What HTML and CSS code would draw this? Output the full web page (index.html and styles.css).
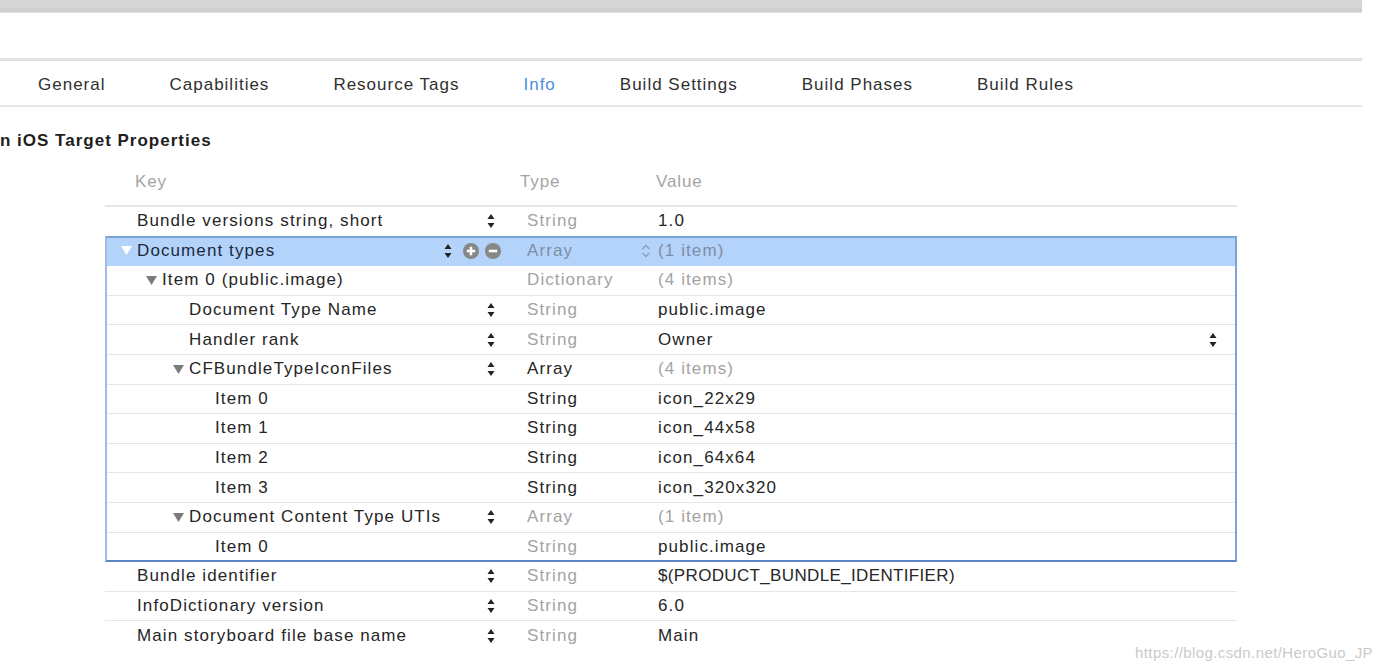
FILE: index.html
```html
<!DOCTYPE html>
<html>
<head>
<meta charset="utf-8">
<title>Info</title>
<link rel="stylesheet" href="styles.css">
</head>
<body>
<div class="page">
  <div class="topbar"></div>
  <nav class="tabs">
    <span class="tab">General</span>
    <span class="tab">Capabilities</span>
    <span class="tab">Resource Tags</span>
    <span class="tab active">Info</span>
    <span class="tab">Build Settings</span>
    <span class="tab">Build Phases</span>
    <span class="tab">Build Rules</span>
  </nav>

  <h2 class="section-title">n iOS Target Properties</h2>

  <div class="colhead">
    <span class="ch-key">Key</span>
    <span class="ch-type">Type</span>
    <span class="ch-value">Value</span>
  </div>

  <div class="plist">
    <div class="row">
      <div class="key l0"><span class="ktext">Bundle versions string, short</span><span class="ctrls"><svg class="stepper" viewBox="0 0 8 16"><polygon points="0.5,6 4,1 7.5,6"/><polygon points="0.5,10 7.5,10 4,15"/></svg></span></div>
      <div class="type muted">String</div>
      <div class="value">1.0</div>
    </div>

    <div class="group">
      <div class="row selected">
        <div class="key l0"><svg class="disc white" viewBox="0 0 11 9"><polygon points="0,0 11,0 5.5,9"/></svg><span class="ktext">Document types</span><span class="ctrls wide"><svg class="stepper" viewBox="0 0 8 16"><polygon points="0.5,6 4,1 7.5,6"/><polygon points="0.5,10 7.5,10 4,15"/></svg><svg class="circ" viewBox="0 0 16 16"><circle cx="8" cy="8" r="8"/><path d="M8 3.8v8.4M3.8 8h8.4"/></svg><svg class="circ" viewBox="0 0 16 16"><circle cx="8" cy="8" r="8"/><path d="M3.8 8h8.4"/></svg></span></div>
        <div class="type sel-muted">Array</div>
        <div class="value chev"><svg class="updown" viewBox="0 0 10 14"><polyline points="1.5,5 5,1.5 8.5,5"/><polyline points="1.5,9 5,12.5 8.5,9"/></svg><span class="sel-muted">(1 item)</span></div>
      </div>
      <div class="row">
        <div class="key l1"><svg class="disc" viewBox="0 0 11 9"><polygon points="0,0 11,0 5.5,9"/></svg><span class="ktext">Item 0 (public.image)</span></div>
        <div class="type muted">Dictionary</div>
        <div class="value muted">(4 items)</div>
      </div>
      <div class="row">
        <div class="key l2"><span class="ktext">Document Type Name</span><span class="ctrls"><svg class="stepper" viewBox="0 0 8 16"><polygon points="0.5,6 4,1 7.5,6"/><polygon points="0.5,10 7.5,10 4,15"/></svg></span></div>
        <div class="type muted">String</div>
        <div class="value">public.image</div>
      </div>
      <div class="row">
        <div class="key l2"><span class="ktext">Handler rank</span><span class="ctrls"><svg class="stepper" viewBox="0 0 8 16"><polygon points="0.5,6 4,1 7.5,6"/><polygon points="0.5,10 7.5,10 4,15"/></svg></span></div>
        <div class="type muted">String</div>
        <div class="value popup"><span class="vtext">Owner</span><svg class="stepper" viewBox="0 0 8 16"><polygon points="0.5,6 4,1 7.5,6"/><polygon points="0.5,10 7.5,10 4,15"/></svg></div>
      </div>
      <div class="row">
        <div class="key l2"><svg class="disc" viewBox="0 0 11 9"><polygon points="0,0 11,0 5.5,9"/></svg><span class="ktext">CFBundleTypeIconFiles</span><span class="ctrls"><svg class="stepper" viewBox="0 0 8 16"><polygon points="0.5,6 4,1 7.5,6"/><polygon points="0.5,10 7.5,10 4,15"/></svg></span></div>
        <div class="type">Array</div>
        <div class="value muted">(4 items)</div>
      </div>
      <div class="row">
        <div class="key l3"><span class="ktext">Item 0</span></div>
        <div class="type">String</div>
        <div class="value">icon_22x29</div>
      </div>
      <div class="row">
        <div class="key l3"><span class="ktext">Item 1</span></div>
        <div class="type">String</div>
        <div class="value">icon_44x58</div>
      </div>
      <div class="row">
        <div class="key l3"><span class="ktext">Item 2</span></div>
        <div class="type">String</div>
        <div class="value">icon_64x64</div>
      </div>
      <div class="row">
        <div class="key l3"><span class="ktext">Item 3</span></div>
        <div class="type">String</div>
        <div class="value">icon_320x320</div>
      </div>
      <div class="row">
        <div class="key l2"><svg class="disc" viewBox="0 0 11 9"><polygon points="0,0 11,0 5.5,9"/></svg><span class="ktext">Document Content Type UTIs</span><span class="ctrls"><svg class="stepper" viewBox="0 0 8 16"><polygon points="0.5,6 4,1 7.5,6"/><polygon points="0.5,10 7.5,10 4,15"/></svg></span></div>
        <div class="type muted">Array</div>
        <div class="value muted">(1 item)</div>
      </div>
      <div class="row last">
        <div class="key l3"><span class="ktext">Item 0</span></div>
        <div class="type muted">String</div>
        <div class="value">public.image</div>
      </div>
    </div>

    <div class="row">
      <div class="key l0"><span class="ktext">Bundle identifier</span><span class="ctrls"><svg class="stepper" viewBox="0 0 8 16"><polygon points="0.5,6 4,1 7.5,6"/><polygon points="0.5,10 7.5,10 4,15"/></svg></span></div>
      <div class="type muted">String</div>
      <div class="value caps">$(PRODUCT_BUNDLE_IDENTIFIER)</div>
    </div>
    <div class="row">
      <div class="key l0"><span class="ktext">InfoDictionary version</span><span class="ctrls"><svg class="stepper" viewBox="0 0 8 16"><polygon points="0.5,6 4,1 7.5,6"/><polygon points="0.5,10 7.5,10 4,15"/></svg></span></div>
      <div class="type muted">String</div>
      <div class="value">6.0</div>
    </div>
    <div class="row nobottom">
      <div class="key l0"><span class="ktext">Main storyboard file base name</span><span class="ctrls"><svg class="stepper" viewBox="0 0 8 16"><polygon points="0.5,6 4,1 7.5,6"/><polygon points="0.5,10 7.5,10 4,15"/></svg></span></div>
      <div class="type muted">String</div>
      <div class="value">Main</div>
    </div>
  </div>

  <div class="watermark">https://blog.csdn.net/HeroGuo_JP</div>
</div>
</body>
</html>
```

FILE: styles.css
```css
* { box-sizing: border-box; }

html, body {
  margin: 0;
  padding: 0;
  background: #ffffff;
}

body {
  font-family: "Liberation Sans", Arial, sans-serif;
  color: #262626;
  width: 1382px;
  height: 668px;
  overflow: hidden;
}

.page {
  position: relative;
  width: 1382px;
  height: 668px;
}

.topbar {
  width: 1362px;
  height: 13px;
  background: linear-gradient(#d6d6d6 0, #d6d6d6 8px, #cecece 8px, #cecece 12px);
  border-bottom: 1px solid #e4e4e4;
}

.tabs {
  width: 1362px;
  margin-top: 45px;
  height: 49px;
  padding-top: 4px;
  border-top: 3px solid #e1e1e1;
  border-bottom: 2px solid #e6e6e6;
  display: flex;
  align-items: center;
  gap: 64px;
  padding-left: 38px;
  font-size: 17px;
  letter-spacing: 1px;
}

.tab { color: #2f2f2f; }
.tab.active { color: #4a8fdc; }

.section-title {
  margin: 22px 0 0 0;
  font-size: 17px;
  line-height: 24px;
  font-weight: bold;
  letter-spacing: 1px;
  color: #1e1e1e;
}

.colhead {
  margin-top: 17px;
  height: 24px;
  line-height: 24px;
  font-size: 17px;
  letter-spacing: 0.9px;
  color: #a5a5a5;
  display: grid;
  grid-template-columns: 135px 385px 136px 1fr;
}
.ch-key { grid-column: 2; }
.ch-type { grid-column: 3; }
.ch-value { grid-column: 4; }

.plist {
  margin-top: 11px;
  margin-left: 105px;
  width: 1132px;
  border-top: 2px solid #e6e6e6;
  font-size: 17px;
  letter-spacing: 1.1px;
}

.group {
  position: relative;
}
.group::after {
  content: "";
  position: absolute;
  inset: -1px 0 0 0;
  border: 2px solid #7ba4d8;
  border-bottom-color: #5a86c3;
  border-left-color: #9dbde3;
  pointer-events: none;
}

.row {
  display: grid;
  grid-template-columns: 400px 131px 1fr;
  height: 29.6px;
  border-bottom: 1px solid #e6e6e6;
  align-items: center;
  white-space: nowrap;
}
.row.last { border-bottom: none; }
.row.nobottom { border-bottom: none; }

.row.selected {
  background: #b4d3fa;
  color: #1b2a40;
  border-bottom-color: #b4d3fa;
}

.key {
  display: flex;
  align-items: center;
  padding-right: 10px;
}
.l0 { padding-left: 32px; }
.l1 { padding-left: 57px; }
.l2 { padding-left: 84px; }
.l3 { padding-left: 110px; }

.ktext { flex: 1; }

.disc {
  width: 11px;
  height: 9px;
  margin-left: -16px;
  margin-right: 5px;
  fill: #7b7b7b;
  flex: none;
}
.disc.white { fill: #ffffff; }

.ctrls {
  display: flex;
  align-items: center;
}
.ctrls.wide {
  gap: 11px;
  margin-right: -6px;
}
.ctrls.wide .circ + .circ { margin-left: -5px; }

.stepper {
  width: 8px;
  height: 16px;
  fill: #222222;
  flex: none;
}

.circ {
  width: 16px;
  height: 16px;
  flex: none;
}
.circ circle { fill: #878787; }
.circ path {
  stroke: #ffffff;
  stroke-width: 2.6;
  fill: none;
}

.type {
  padding-left: 22px;
  color: #262626;
}
.value {
  padding-left: 22px;
  color: #262626;
}
.value.caps { letter-spacing: 0.35px; }
.muted { color: #a3a3a3; }
.sel-muted { color: #7e8ea6; }

.value.chev {
  display: flex;
  align-items: center;
  padding-left: 5px;
}
.updown {
  width: 10px;
  height: 14px;
  margin-right: 7px;
  fill: none;
  stroke: #8d9cb3;
  stroke-width: 1.3;
}

.value.popup {
  display: flex;
  align-items: center;
  padding-right: 20px;
}
.vtext { flex: 1; }

.watermark {
  position: absolute;
  right: 9px;
  bottom: 7px;
  font-family: "Liberation Sans", Arial, sans-serif;
  font-size: 15px;
  letter-spacing: 0.4px;
  color: #cacaca;
}
```
